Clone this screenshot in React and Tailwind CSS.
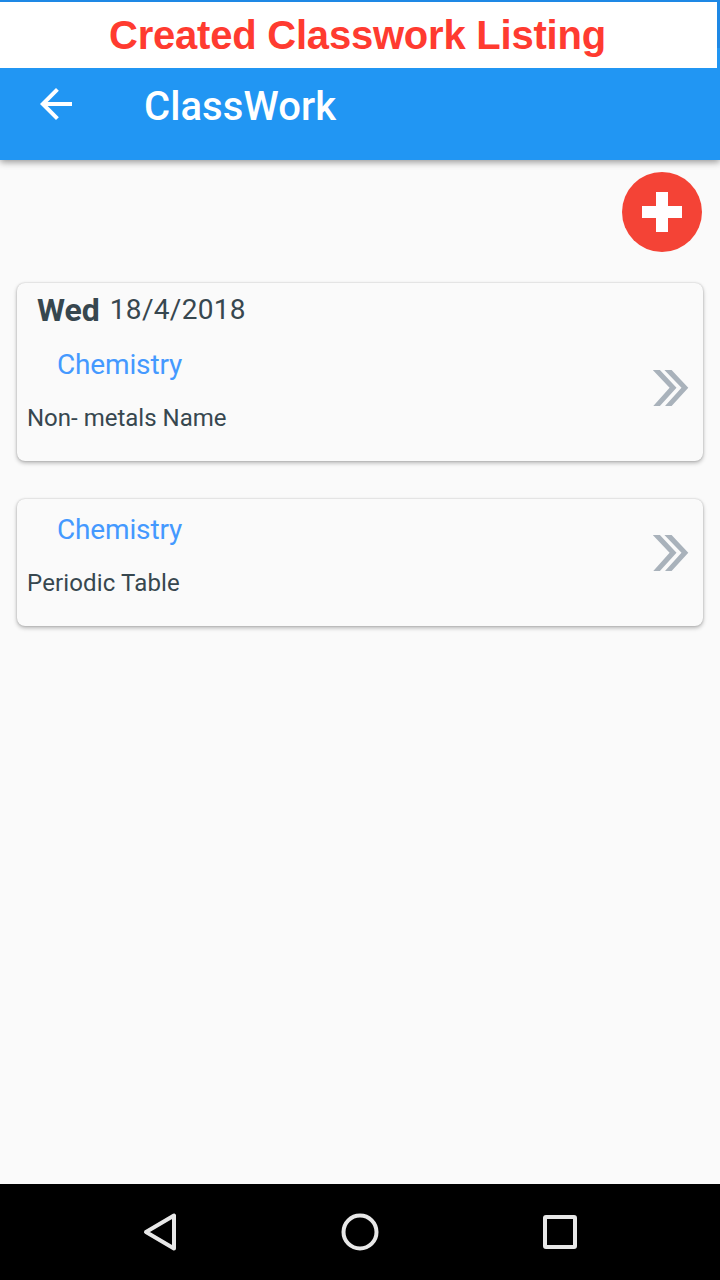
function DoubleChevron() {
  return (
    <svg className="h-9 w-9 shrink-0" viewBox="0 0 36 36" fill="#a9b2bb">
      <path d="M-0.300 0h7.200L23.500 17.700 6.900 36H0.300L16.600 17.700z" />
      <path d="M11.400 0h7.200L35.300 17.700 18.600 36H12L28.500 17.700z" />
    </svg>
  );
}

function Work({ subject, topic, topicClass }) {
  return (
    <div className="flex justify-between pr-[14px]">
      <div>
        <div className="pl-[40px] text-[28px] leading-[40px] tracking-[-0.15px] text-[#4499ff]">
          {subject}
        </div>
        <div
          className={"mt-[15px] pl-[10px] text-[24px] leading-[36px] text-[#37474f] " + topicClass}
        >
          {topic}
        </div>
      </div>
      <div className="pt-[25px]">
        <DoubleChevron />
      </div>
    </div>
  );
}

const cardClass =
  "rounded-[8px] bg-[#fafafa] shadow-[0_2px_4px_rgba(0,0,0,0.28),0_0_2px_rgba(0,0,0,0.2)]";

export default function App() {
  return (
    <div className="flex h-[1280px] w-[720px] flex-col overflow-hidden bg-[#fafafa] font-['Roboto',sans-serif]">
      <header className="relative flex h-[160px] shrink-0 flex-col bg-[#2196f3] shadow-[0_2px_7px_rgba(0,0,0,0.42)]">
        <div className="flex h-[48px] w-full shrink-0 bg-[#1e88e5] pt-[2px]">
          <div className="h-[66px] w-[717px] bg-white pl-[109px] font-['Liberation_Sans',sans-serif] text-[40px] leading-[67px] font-bold tracking-[-0.22px] whitespace-nowrap text-[#ff3b30]">
            Created Classwork Listing
          </div>
        </div>
        <div className="mt-[20px] flex items-start pl-[32px] text-white">
          <svg className="mt-[12px] h-12 w-12" viewBox="0 0 24 24" fill="currentColor">
            <path d="M20 11H7.83l5.59-5.59L12 4l-8 8 8 8 1.41-1.41L7.83 13H20v-2z" />
          </svg>
          <h1 className="mt-[15px] ml-[64px] text-[40px] leading-[48px] font-medium tracking-[0.08px]">ClassWork</h1>
        </div>
      </header>

      <main className="flex-1 px-[17px]">
        <div className="flex justify-end pt-[12px] pr-px">
          <button className="flex h-20 w-20 items-center justify-center rounded-full bg-[#f44336]">
            <svg className="h-10 w-10" viewBox="0 0 40 40" fill="#fff">
              <path d="M14 0h12v14h14v12H26v14H14V26H0V14h14z" />
            </svg>
          </button>
        </div>
        <section className={"mt-[31px] h-[178px] " + cardClass}>
          <div className="flex h-[62px] items-start pl-[20px] text-[#37474f]">
            <span className="text-[32px] leading-[54px] font-bold">Wed</span>
            <span className="ml-[10px] text-[28px] leading-[53px] tracking-[0.3px]">18/4/2018</span>
          </div>
          <Work subject="Chemistry" topic="Non- metals Name" topicClass="tracking-normal" />
        </section>
        <section className={"mt-[38px] h-[127px] pt-[11px] " + cardClass}>
          <Work subject="Chemistry" topic="Periodic Table" topicClass="tracking-[0.14px]" />
        </section>
      </main>

      <nav className="h-[96px] shrink-0 bg-black">
        <svg className="h-[96px] w-[720px]" viewBox="0 0 720 96" fill="none" stroke="#e8e8e8" strokeWidth="4" strokeLinejoin="round">
          <path d="M146 48l28-16.500v33z" />
          <circle cx="360" cy="48" r="16.500" />
          <rect x="545" y="33" width="30" height="30" rx="1" />
        </svg>
      </nav>
    </div>
  );
}
